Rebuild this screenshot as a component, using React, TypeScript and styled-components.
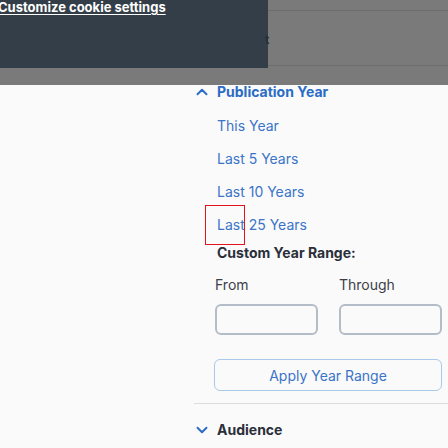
import React from "react";
import styled, { createGlobalStyle } from "styled-components";
import { ChevronUp, ChevronDown } from "lucide-react";

const Global = createGlobalStyle`
  html, body { margin: 0; padding: 0; background: #fafafa; }
  body { font-family: Inter, "Noto Sans", sans-serif; width: 448px; height: 448px; overflow: hidden; }
  * { box-sizing: border-box; }
`;

const Band = styled.div`
  display: flex;
  height: 85px;
  background: #7a7a7a;
`;

const CookiePanel = styled.div`
  width: 268px;
  height: 68px;
  background: #343e48;
  overflow: hidden;
`;

const CookieLink = styled.a`
  display: block;
  margin-left: -2px;
  color: #ffffff;
  font-weight: 700;
  font-size: 13px;
  line-height: 15px;
  text-decoration: underline;
  text-decoration-thickness: 1px;
  text-underline-offset: 2px;
  white-space: nowrap;
`;

const BehindArea = styled.div`
  flex: 1;
  margin-top: 10px;
  height: 56px;
  border-top: 1px solid #6c6c6c;
  border-bottom: 1px solid #6c6c6c;
  display: flex;
  align-items: center;
`;

const PeekGlyph = styled.span`
  margin-left: -3px;
  margin-top: 2px;
  color: #26303a;
  font-size: 12px;
  font-weight: 700;
`;

const Sidebar = styled.div`
  margin-left: 194px;
`;

const SectionHeader = styled.div<{ $tone: "blue" | "dark" }>`
  display: flex;
  align-items: center;
  height: 14px;
  line-height: 14px;
  font-size: 14px;
  font-weight: 700;
  color: ${(p) => (p.$tone === "blue" ? "#2b6cc4" : "#2a2f3a")};
  svg {
    flex: none;
    color: #2b6cc4;
    margin-left: -1.5px;
    margin-right: 6.5px;
  }
`;

const OptionList = styled.div`
  margin-top: 10px;
  padding-left: 23px;
`;

const Option = styled.div`
  position: relative;
  height: 33px;
  line-height: 33px;
  font-size: 14px;
  color: #3b74c8;
`;

const FocusRing = styled.span`
  position: absolute;
  left: -12px;
  top: -3px;
  width: 40px;
  height: 40px;
  border: 1.5px solid #e3141c;
`;

const Custom = styled.div`
  padding-left: 21px;
  padding-right: 6px;
  padding-top: 2px;
`;

const CustomTitle = styled.div`
  padding-left: 2px;
  line-height: 20px;
  font-size: 14px;
  font-weight: 700;
  color: #2a2f3a;
`;

const RangeGrid = styled.div`
  display: grid;
  grid-template-columns: 103px 103px;
  column-gap: 21px;
  margin-top: 12px;
`;

const Field = styled.div`
  display: flex;
  flex-direction: column;
  gap: 9px;
`;

const FieldLabel = styled.label`
  display: block;
  height: 20px;
  line-height: 20px;
  font-size: 14px;
  color: #3d3f48;
`;

const YearInput = styled.input`
  display: block;
  width: 103px;
  height: 31px;
  margin: 0;
  border: 2px solid #b3bcc7;
  border-radius: 6px;
  background: #fafafa;
  outline: none;
`;

const ApplyRow = styled.div`
  padding-top: 24px;
  margin-left: -1px;
`;

const ApplyButton = styled.button`
  display: block;
  width: 228px;
  height: 32px;
  margin: 0;
  padding: 0;
  border: 1px solid #a9c9ea;
  border-radius: 6px;
  background: #fafafa;
  color: #3b74c8;
  font-family: inherit;
  font-size: 14px;
`;

const Divider = styled.div`
  margin-top: 12px;
  height: 1px;
  background: #dcdcdc;
`;

const AudienceRow = styled(SectionHeader)`
  margin-top: 19px;
`;

export default function App() {
  return (
    <>
      <Global />
      <Band>
        <CookiePanel>
          <CookieLink>Customize cookie settings</CookieLink>
        </CookiePanel>
        <BehindArea>
          <PeekGlyph>t</PeekGlyph>
        </BehindArea>
      </Band>
      <Sidebar>
        <SectionHeader $tone="blue">
          <ChevronUp size={18} strokeWidth={2.6} />
          Publication Year
        </SectionHeader>
        <OptionList>
          <Option>This Year</Option>
          <Option>Last 5 Years</Option>
          <Option>Last 10 Years</Option>
          <Option>
            <FocusRing />
            Last 25 Years
          </Option>
        </OptionList>
        <Custom>
          <CustomTitle>Custom Year Range:</CustomTitle>
          <RangeGrid>
            <Field>
              <FieldLabel>From</FieldLabel>
              <YearInput />
            </Field>
            <Field>
              <FieldLabel>Through</FieldLabel>
              <YearInput />
            </Field>
          </RangeGrid>
          <ApplyRow>
            <ApplyButton>Apply Year Range</ApplyButton>
          </ApplyRow>
        </Custom>
        <Divider />
        <AudienceRow $tone="dark">
          <ChevronDown size={18} strokeWidth={2.6} />
          Audience
        </AudienceRow>
      </Sidebar>
    </>
  );
}
